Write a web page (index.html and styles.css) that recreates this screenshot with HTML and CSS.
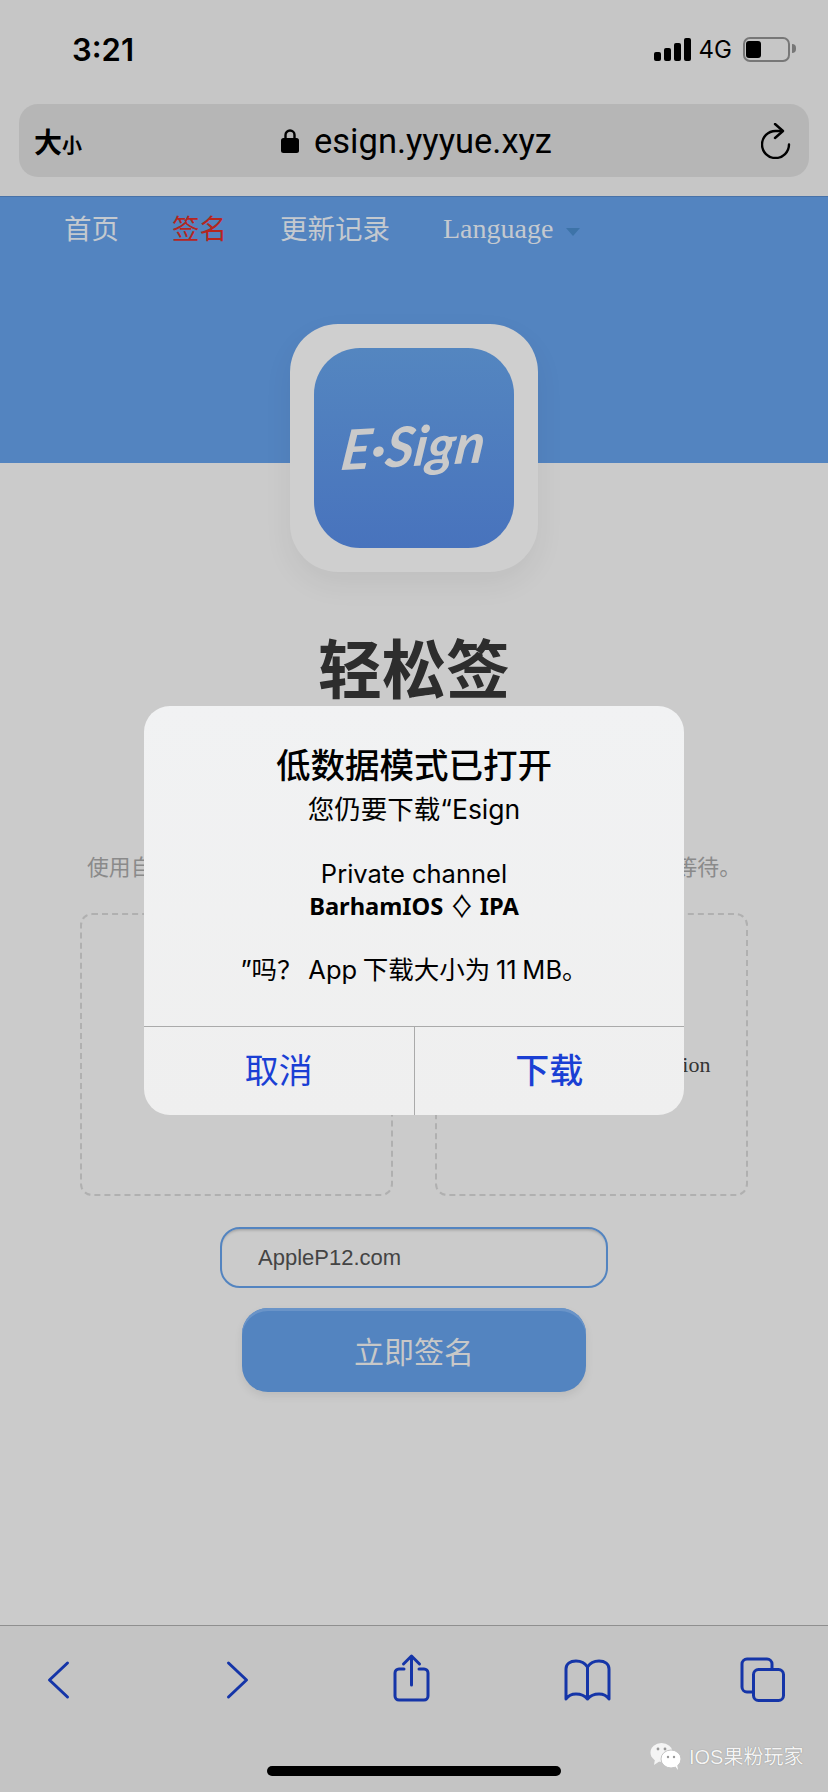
FILE: index.html
```html
<!DOCTYPE html>
<html lang="zh-CN">
<head>
    <meta charset="UTF-8">
    <meta name="viewport" content="width=device-width, initial-scale=1.0">
    <title>轻松签</title>
    <link rel="stylesheet" href="styles.css">
</head>
<body>
    <div class="phone">
        <div class="top-chrome">
            <div class="status-bar">
                <span class="time">3:21</span>
                <div class="status-right">
                    <div class="signal">
                        <i class="bar-1"></i><i class="bar-2"></i><i class="bar-3"></i><i class="bar-4"></i>
                    </div>
                    <span class="net">4G</span>
                    <div class="battery"><i></i></div>
                </div>
            </div>
            <div class="address-bar">
                <div class="text-size">大<small>小</small></div>
                <div class="url">
                    <svg class="lock" viewBox="0 0 18 25" width="18" height="25">
                        <path d="M4.5 11V7a4.5 4.5 0 0 1 9 0v4" fill="none" stroke="#000" stroke-width="2.4"/>
                        <rect x="0" y="10" width="18" height="15" rx="2.5" fill="#000"/>
                    </svg>
                    <span>esign.yyyue.xyz</span>
                </div>
                <svg class="reload" viewBox="0 0 30 36" width="30" height="36">
                    <path d="M21 8h-6.500A13.500 13.500 0 1 0 28 21.500" fill="none" stroke="#000" stroke-width="2.400" stroke-linecap="round"/>
                    <path d="M14 1l8 7-8 7" fill="none" stroke="#000" stroke-width="2.400" stroke-linecap="round" stroke-linejoin="round"/>
                </svg>
            </div>
        </div>

        <header class="site-header">
            <nav class="site-nav">
                <a href="#">首页</a>
                <a href="#" class="active">签名</a>
                <a href="#">更新记录</a>
                <a href="#" class="lang">Language<i class="caret"></i></a>
            </nav>
            <div class="app-logo">
                <div class="app-logo-inner"><span>E·Sign</span></div>
            </div>
        </header>

        <main class="content">
            <h1 class="title">轻松签</h1>
            <p class="desc">使用自己的证书为应用签名，上传后自动处理，无需长时间的等待。</p>
            <div class="upload-row">
                <div class="upload-box">Upload certificate</div>
                <div class="upload-box">Click to upload Application</div>
            </div>
            <input class="cert-input" type="text" value="AppleP12.com">
            <button class="sign-btn">立即签名</button>
        </main>

        <div class="toolbar">
            <svg class="tool" viewBox="0 0 56 56"><path d="M37.5 9L19.5 26l18 17"/></svg>
            <svg class="tool" viewBox="0 0 56 56"><path d="M22.5 9l18 17-18 17"/></svg>
            <svg class="tool" viewBox="0 0 56 56">
                <path d="M22 15h-5a4 4 0 0 0-4 4v23a4 4 0 0 0 4 4h25a4 4 0 0 0 4-4V19a4 4 0 0 0-4-4h-5"/>
                <path d="M29.5 31V2M21.5 10l8-8 8 8"/>
            </svg>
            <svg class="tool" viewBox="0 0 56 56">
                <path d="M30.5 13C28 9 24 7 19 7c-6 0-10 3-10 8v30c2-3 6-5 10-5 5 0 9 2 11.500 5 2.500-3 6.500-5 11.500-5 4 0 8 2 10 5V15c0-5-4-8-10-8-5 0-9 2-11.500 6zM30.500 13v32"/>
            </svg>
            <svg class="tool" viewBox="0 0 56 56">
                <rect x="20.5" y="15.5" width="30" height="31" rx="5"/>
                <path d="M39 15v-5a5 5 0 0 0-5-5H14a5 5 0 0 0-5 5v23a5 5 0 0 0 5 5h6"/>
            </svg>
        </div>

        <div class="alert">
            <div class="alert-body">
                <h2 class="alert-title">低数据模式已打开</h2>
                <p class="alert-text"><span class="alert-lead">您仍要下载“Esign</span><br><br>Private channel<br><b>BarhamIOS ♢ IPA</b><br><br><span class="alert-size">”吗？ App 下载大小为 11 MB。</span></p>
            </div>
            <div class="alert-actions">
                <button class="alert-btn">取消</button>
                <button class="alert-btn primary">下载</button>
            </div>
        </div>

        <div class="watermark">
            <svg viewBox="0 0 32 28" width="32" height="28">
                <ellipse cx="11.5" cy="10.5" rx="11" ry="9.5" fill="#f4f4f4"/>
                <path d="M5 17l-1 6 6-4z" fill="#f4f4f4"/>
                <ellipse cx="21" cy="17" rx="10" ry="9" fill="#fff" stroke="#c4c4c4"/>
                <path d="M25 24l3 4-1-6z" fill="#fff"/>
                <circle cx="8" cy="7" r="1.4" fill="#999"/>
                <circle cx="15" cy="7" r="1.4" fill="#999"/>
                <circle cx="18" cy="15" r="1.2" fill="#999"/>
                <circle cx="24" cy="15" r="1.2" fill="#999"/>
            </svg>
            <span>IOS果粉玩家</span>
        </div>
        <div class="home-indicator"></div>
    </div>
</body>
</html>
```

FILE: styles.css
```css
* {
    box-sizing: border-box;
}

body {
    margin: 0;
    font-family: "Liberation Sans", "Noto Sans CJK SC", sans-serif;
    background: #cbcbcb;
}

.phone {
    position: relative;
    width: 828px;
    height: 1792px;
    display: flex;
    flex-direction: column;
    overflow: hidden;
    background: #cbcbcb;
}

/* browser chrome */
.top-chrome {
    height: 196px;
    background: #c6c6c6;
    padding: 0 19px;
}

.status-bar {
    height: 104px;
    display: flex;
    justify-content: space-between;
    align-items: center;
    padding: 0 19px 6px 53px;
}

.time {
    font-family: Inter, "Liberation Sans", sans-serif;
    font-size: 31px;
    font-weight: 600;
    color: #000;
}

.status-right {
    display: flex;
    align-items: center;
}

.signal {
    display: flex;
    align-items: flex-end;
    gap: 3px;
    height: 23px;
}

.signal i {
    width: 7px;
    background: #000;
    border-radius: 2px;
}

.bar-1 { height: 9px; }
.bar-2 { height: 13px; }
.bar-3 { height: 18px; }
.bar-4 { height: 23px; }

.net {
    font-family: Inter, "Liberation Sans", sans-serif;
    font-size: 24px;
    color: #000;
    margin: 0 11px 0 8px;
}

.battery {
    position: relative;
    width: 47px;
    height: 25px;
    border: 2px solid #777;
    border-radius: 7px;
    padding: 2px 1px;
}

.battery i {
    display: block;
    width: 15px;
    height: 17px;
    background: #000;
    border-radius: 3px;
}

.battery::after {
    content: "";
    position: absolute;
    right: -8px;
    top: 5px;
    width: 4px;
    height: 9px;
    background: #777;
    border-radius: 0 4px 4px 0;
}

.address-bar {
    height: 73px;
    background: #b6b6b6;
    border-radius: 19px;
    display: grid;
    grid-template-columns: 1fr auto 1fr;
    align-items: center;
    padding: 0 18px 0 15px;
    color: #000;
}

.text-size {
    font-size: 28px;
    font-weight: 700;
}

.text-size small {
    font-size: 20px;
}

.url {
    display: flex;
    align-items: center;
    gap: 15px;
    margin-left: 8px;
    font-family: Roboto, "Liberation Sans", sans-serif;
    font-size: 34.5px;
}

.reload {
    justify-self: end;
}

/* site */
.site-header {
    height: 267px;
    background: #5384c0;
    border-top: 1px solid #4872a8;
}

.site-nav {
    display: flex;
    align-items: center;
    height: 60px;
    padding-left: 64px;
    gap: 53px;
    font-size: 27.5px;
}

.site-nav a {
    color: #c4c9cf;
    text-decoration: none;
}

.site-nav a.active {
    color: #b5261f;
}

.site-nav a.lang {
    font-family: "Liberation Serif", serif;
    font-size: 28px;
    padding-top: 4px;
}

.caret {
    display: inline-block;
    margin-left: 13px;
    vertical-align: middle;
    border: 7px solid transparent;
    border-top: 8px solid #3d73a8;
    border-bottom: 0;
}

.app-logo {
    width: 248px;
    height: 248px;
    margin: 67px auto 0;
    padding: 24px;
    background: #cfcfcf;
    border-radius: 48px;
    box-shadow: 0 12px 30px rgba(0, 0, 0, 0.06);
}

.app-logo-inner {
    height: 200px;
    display: flex;
    align-items: center;
    justify-content: center;
    border-radius: 46px;
    background: linear-gradient(180deg, #5486c0, #4873bd);
    color: #cacaca;
    font-family: Lato, "Liberation Sans", sans-serif;
    font-size: 55px;
    font-style: italic;
    font-weight: 700;
}

.app-logo-inner span {
    transform: translateY(-3px) rotate(-3deg) skewX(-10deg);
}

.content {
    flex: 1;
    display: flex;
    flex-direction: column;
    align-items: center;
}

.title {
    margin: 163px 0 0;
    font-size: 64px;
    line-height: 90px;
    font-weight: 700;
    color: #2d2d2d;
}

.desc {
    margin: 137px 0 0;
    font-size: 21.8px;
    line-height: 30px;
    color: #8a8a8a;
    white-space: nowrap;
}

.upload-row {
    display: flex;
    gap: 42px;
    margin-top: 30px;
}

.upload-box {
    width: 313px;
    height: 283px;
    border: 2px dashed #b0b0b0;
    border-radius: 12px;
    display: flex;
    align-items: center;
    justify-content: center;
    padding: 20px 6px 0 0;
    font-family: "Liberation Serif", serif;
    font-size: 22px;
    color: #333;
}

.cert-input {
    width: 388px;
    height: 61px;
    margin-top: 31px;
    padding: 0 36px;
    border: 2px solid #5384c0;
    border-radius: 20px;
    background: transparent;
    box-shadow: inset 0 3px 3px -2px rgba(0, 0, 0, 0.25);
    font-family: "Liberation Sans", sans-serif;
    font-size: 22px;
    color: #444;
}

.sign-btn {
    width: 344px;
    height: 84px;
    margin-top: 20px;
    border: 0;
    border-radius: 26px;
    background: #5384c0;
    box-shadow: inset 0 3px 0 #6a94c8, 0 4px 8px rgba(0, 0, 0, 0.08);
    font-family: "Liberation Sans", "Noto Sans CJK SC", sans-serif;
    font-size: 30px;
    color: #c8c8c8;
}

.toolbar {
    height: 167px;
    padding: 28px 39px 0 30px;
    background: #c4c4c4;
    border-top: 1px solid #8f8f8f;
    display: flex;
    justify-content: space-between;
    align-items: flex-start;
}

.tool {
    width: 56px;
    height: 56px;
    fill: none;
    stroke: #1535a8;
    stroke-width: 3;
    stroke-linecap: round;
    stroke-linejoin: round;
    overflow: visible;
}

/* dialog */
.alert {
    position: absolute;
    left: 144px;
    top: 706px;
    width: 540px;
    height: 409px;
    display: flex;
    flex-direction: column;
    background: linear-gradient(180deg, #f1f2f3, #efefef);
    border-radius: 26px;
    overflow: hidden;
    color: #000;
    text-align: center;
}

.alert-body {
    flex: 1;
    padding-top: 38px;
}

.alert-title {
    margin: 0;
    font-size: 34.5px;
    line-height: 44px;
    font-weight: 500;
}

.alert-text {
    margin: 5px 0 0;
    font-family: Inter, "Noto Sans CJK SC", sans-serif;
    font-size: 25.5px;
    line-height: 32px;
}

.alert-lead {
    font-size: 26.5px;
}

.alert-size {
    word-spacing: -1.5px;
}

.alert-text b {
    font-family: "Noto Sans", sans-serif;
    font-size: 23.7px;
}

.alert-actions {
    height: 89px;
    display: flex;
    border-top: 1px solid #aaa;
}

.alert-btn {
    flex: 1;
    border: 0;
    background: transparent;
    padding: 0 0 6px;
    font-family: "Noto Sans CJK SC", sans-serif;
    font-size: 34px;
    color: #1a3fd4;
}

.alert-btn.primary {
    border-left: 1px solid #aaa;
    font-weight: 500;
}

.watermark {
    position: absolute;
    left: 650px;
    top: 1741px;
    display: flex;
    align-items: center;
    gap: 7px;
    font-family: "Liberation Sans", "Noto Sans CJK SC", sans-serif;
    font-size: 20px;
    color: #f4f4f4;
    text-shadow: 0 0 1px #777;
}

.home-indicator {
    position: absolute;
    left: 267px;
    top: 1766px;
    width: 294px;
    height: 10px;
    background: #000;
    border-radius: 5px;
}
```
